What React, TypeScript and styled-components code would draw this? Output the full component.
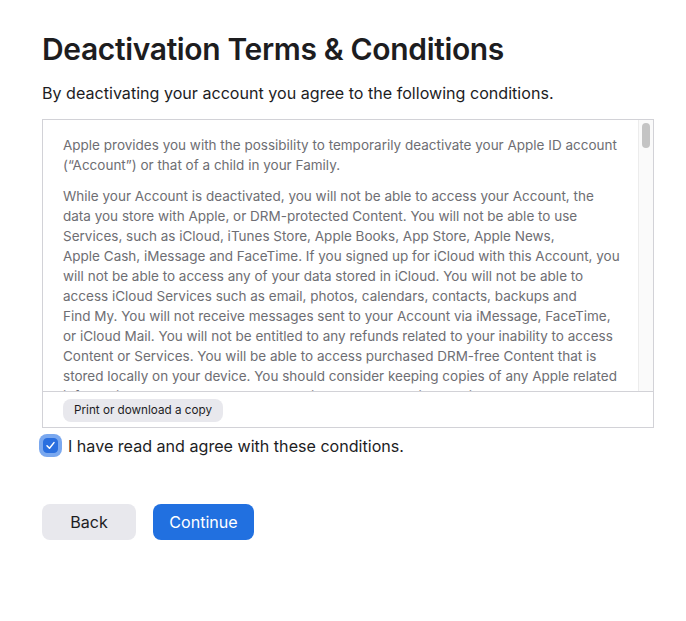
import { createGlobalStyle } from "styled-components";
import styled from "styled-components";
import { Fragment, useState } from "react";

const GlobalStyle = createGlobalStyle`
  html, body {
    margin: 0;
    padding: 0;
    background: #ffffff;
  }
  body {
    font-family: Inter, "Liberation Sans", sans-serif;
    color: #1d1d1f;
    -webkit-font-smoothing: antialiased;
  }
`;

const Page = styled.div`
  width: 612px;
  padding: 29px 0 0 42px;
`;

const Title = styled.h1`
  margin: 0;
  font-size: 30px;
  font-weight: 600;
  letter-spacing: -0.35px;
  line-height: 40px;
  color: #1d1d1f;
`;

const Intro = styled.p`
  margin: 12px 0 0;
  font-size: 16.1px;
  line-height: 24px;
  color: #1d1d1f;
`;

const TermsBox = styled.div`
  margin-top: 14px;
  border: 1px solid #d2d2d7;
  display: flex;
  flex-direction: column;
`;

const TermsBody = styled.div`
  display: flex;
  height: 271px;
`;

const Scroller = styled.div`
  flex: 1;
  overflow-y: auto;
  padding: 0 6px 0 20px;
  scrollbar-width: none;
  &::-webkit-scrollbar {
    display: none;
  }
`;

const Track = styled.div`
  width: 15px;
  box-sizing: border-box;
  background: #fafafa;
  border-left: 1px solid #ececec;
  padding: 3px 3px 0 3px;
`;

const Thumb = styled.div`
  width: 8px;
  height: 25px;
  border-radius: 4px;
  background: #c4c4c4;
`;

const Para = styled.p`
  margin: 15px 0 11px;
  & + & {
    margin-top: 0;
  }
  font-size: 13.5px;
  line-height: 20px;
  color: #6e6e73;
  white-space: nowrap;
`;

const Footer = styled.div`
  border-top: 1px solid #d2d2d7;
  padding: 6px 20px 5px;
`;

const SmallButton = styled.button`
  font-family: inherit;
  font-size: 11.7px;
  color: #1d1d1f;
  background: #e8e8ed;
  border: none;
  border-radius: 8px;
  height: 23px;
  padding: 0 11px;
`;

const AgreeRow = styled.label`
  display: flex;
  align-items: center;
  gap: 10px;
  margin: 6px 0 0 1px;
  font-size: 16.1px;
  line-height: 24px;
  color: #1d1d1f;
  cursor: pointer;
`;

const CheckBox = styled.span<{ $checked: boolean }>`
  width: 15px;
  height: 15px;
  box-sizing: border-box;
  border-radius: 4px;
  background: ${(p) => (p.$checked ? "#2a6fdf" : "#ffffff")};
  border: 1px solid ${(p) => (p.$checked ? "#2a6fdf" : "#b5b5b5")};
  box-shadow: 0 0 0 4px #7aa8ef;
  display: flex;
  align-items: center;
  justify-content: center;
`;

const Actions = styled.div`
  display: flex;
  gap: 17px;
  margin-top: 46px;
`;

const Button = styled.button<{ $primary?: boolean; $width: number }>`
  font-family: inherit;
  font-size: 16.1px;
  width: ${(p) => p.$width}px;
  height: 36px;
  border: none;
  border-radius: 8px;
  padding: 0;
  background: ${(p) => (p.$primary ? "#2170e0" : "#e8e8ed")};
  color: ${(p) => (p.$primary ? "#ffffff" : "#1d1d1f")};
  cursor: pointer;
`;

const terms: string[][] = [
  [
    "Apple provides you with the possibility to temporarily deactivate your Apple ID account",
    "(“Account”) or that of a child in your Family.",
  ],
  [
    "While your Account is deactivated, you will not be able to access your Account, the",
    "data you store with Apple, or DRM-protected Content. You will not be able to use",
    "Services, such as iCloud, iTunes Store, Apple Books, App Store, Apple News,",
    "Apple Cash, iMessage and FaceTime. If you signed up for iCloud with this Account, you",
    "will not be able to access any of your data stored in iCloud. You will not be able to",
    "access iCloud Services such as email, photos, calendars, contacts, backups and",
    "Find My. You will not receive messages sent to your Account via iMessage, FaceTime,",
    "or iCloud Mail. You will not be entitled to any refunds related to your inability to access",
    "Content or Services. You will be able to access purchased DRM-free Content that is",
    "stored locally on your device. You should consider keeping copies of any Apple related",
    "information and data you may need while your Account is deactivated.",
  ],
  [
    "You can reactivate your Account at any time by contacting Apple Support. Once your",
    "Account is reactivated, you will regain access to your data and Services.",
  ],
];

export default function App() {
  const [checked, setChecked] = useState(true);
  const [scroll, setScroll] = useState(0);

  const onScroll = (e: React.UIEvent<HTMLDivElement>) => {
    const el = e.currentTarget;
    const max = el.scrollHeight - el.clientHeight;
    setScroll(max > 0 ? el.scrollTop / max : 0);
  };

  return (
    <Page>
      <GlobalStyle />
      <Title>Deactivation Terms &amp; Conditions</Title>
      <Intro>By deactivating your account you agree to the following conditions.</Intro>
      <TermsBox>
        <TermsBody>
          <Scroller onScroll={onScroll}>
            {terms.map((lines, i) => (
              <Para key={i}>
                {lines.map((line, j) => (
                  <Fragment key={j}>
                    {j > 0 && <br />}
                    {line}
                  </Fragment>
                ))}
              </Para>
            ))}
          </Scroller>
          <Track>
            <Thumb style={{ transform: `translateY(${scroll * 240}px)` }} />
          </Track>
        </TermsBody>
        <Footer>
          <SmallButton type="button">Print or download a copy</SmallButton>
        </Footer>
      </TermsBox>
      <AgreeRow onClick={() => setChecked(!checked)}>
        <CheckBox $checked={checked}>
          {checked && (
            <svg width="11" height="11" viewBox="0 0 11 11">
              <path d="M2 5.8 L4.5 8.3 L9 2.6" stroke="#fff" strokeWidth="1.5" fill="none" strokeLinecap="round" strokeLinejoin="round" />
            </svg>
          )}
        </CheckBox>
        I have read and agree with these conditions.
      </AgreeRow>
      <Actions>
        <Button type="button" $width={94}>Back</Button>
        <Button type="button" $primary $width={101}>Continue</Button>
      </Actions>
    </Page>
  );
}
